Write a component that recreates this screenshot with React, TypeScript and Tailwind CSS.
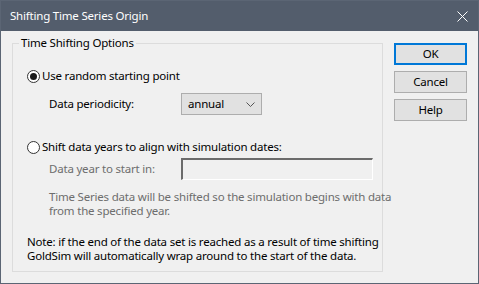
export default function App() {
    const font = { fontFamily: '"Noto Sans", "Open Sans", Arial, sans-serif' };

    return (
        <div className="w-[479px] h-[284px] bg-[#f0f0f0] border border-[#5b6574] flex flex-col text-[11.5px] tracking-[-0.2px] text-black" style={font}>
            {/* title bar */}
            <div className="h-[30px] bg-[#535d6c] flex items-center justify-between pl-[9px] pr-[10px] text-white">
                <span className="leading-none">Shifting Time Series Origin</span>
                <svg width="11" height="11" viewBox="0 0 11 11">
                    <path d="M0.5 0.5 L10.5 10.5 M10.5 0.5 L0.5 10.5" stroke="#ffffff" strokeWidth="1" />
                </svg>
            </div>

            <div className="flex pl-[11px] pt-[12px] gap-[11px]">
                {/* group box */}
                <div className="relative w-[371px] h-[229px] border border-[#dcdcdc] pt-[24px]">
                    <span className="absolute left-[6px] -top-[9px] px-[2px] bg-[#f0f0f0] leading-[16px]">Time Shifting Options</span>

                    <div className="flex items-center h-[16px] ml-[14px]">
                        <div className="w-[13px] h-[13px] rounded-full border border-[#333333] bg-white flex items-center justify-center">
                            <div className="w-[7px] h-[7px] rounded-full bg-[#1a1a1a]" />
                        </div>
                        <span className="ml-[2px] leading-[16px]">Use random starting point</span>
                    </div>

                    <div className="flex items-center mt-[9px] ml-[36px]">
                        <span className="w-[132px]">Data periodicity:</span>
                        <div className="w-[81px] h-[22px] border border-[#adadad] bg-[#e1e1e1] flex items-center justify-between pl-[6px] pr-[6px]">
                            <span>annual</span>
                            <svg width="9" height="5" viewBox="0 0 9 5">
                                <path d="M0.5 0.5 L4.5 4.5 L8.5 0.5" stroke="#555555" strokeWidth="1" fill="none" />
                            </svg>
                        </div>
                    </div>

                    <div className="flex items-center h-[16px] ml-[14px] mt-[24px]">
                        <div className="w-[13px] h-[13px] rounded-full border border-[#333333] bg-white" />
                        <span className="ml-[2px] leading-[16px]">Shift data years to align with simulation dates:</span>
                    </div>

                    <div className="flex items-center mt-[3px] ml-[36px] text-[#6d6d6d]">
                        <span className="w-[132px]">Data year to start in:</span>
                        <div className="w-[192px] h-[22px] border-t-[2px] border-l-[2px] border-b border-r border-t-[#6b6b6b] border-l-[#6b6b6b] border-b-white border-r-white bg-[#f0f0f0]" />
                    </div>

                    <p className="mt-[10px] ml-[36px] leading-[14px] text-[#6d6d6d] whitespace-nowrap">
                        Time Series data will be shifted so the simulation begins with data<br />
                        from the specified year.
                    </p>

                    <p className="mt-[17px] ml-[14px] leading-[14px] whitespace-nowrap">
                        Note: if the end of the data set is reached as a result of time shifting<br />
                        GoldSim will automatically wrap around to the start of the data.
                    </p>
                </div>

                {/* buttons */}
                <div className="flex flex-col gap-[6px] w-[73px]">
                    <button className="h-[22px] border-2 border-[#0078d7] bg-[#e1e1e1] leading-none">OK</button>
                    <button className="h-[22px] border border-[#adadad] bg-[#e1e1e1] leading-none">Cancel</button>
                    <button className="h-[22px] border border-[#adadad] bg-[#e1e1e1] leading-none">Help</button>
                </div>
            </div>
        </div>
    );
}
